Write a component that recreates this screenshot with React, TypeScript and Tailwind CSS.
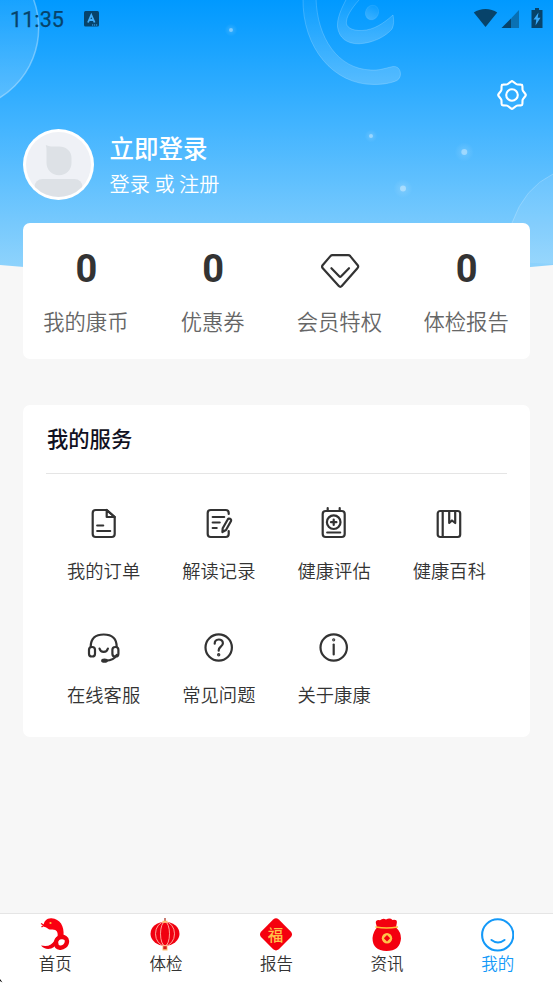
import type { ReactNode } from "react";

const stroke = {
  fill: "none",
  stroke: "currentColor",
  strokeLinecap: "round",
  strokeLinejoin: "round",
} as const;

function HeaderBackground() {
  return (
    <svg className="absolute left-0 top-0" width="553" height="280" viewBox="0 0 553 280">
      <defs>
        <linearGradient id="sky" x1="0" y1="0" x2="0" y2="1">
          <stop offset="0" stopColor="#0099ff" />
          <stop offset="0.45" stopColor="#42b4ff" />
          <stop offset="1" stopColor="#94d5fc" />
        </linearGradient>
        <linearGradient id="shade" x1="0" y1="0" x2="0" y2="1">
          <stop offset="0" stopColor="#fff" stopOpacity="0.04" />
          <stop offset="1" stopColor="#fff" stopOpacity="0.2" />
        </linearGradient>
        <radialGradient id="glow">
          <stop offset="0" stopColor="#fff" stopOpacity="0.16" />
          <stop offset="1" stopColor="#fff" stopOpacity="0" />
        </radialGradient>
      </defs>
      <path d="M0 0H553V265Q276 291 0 265Z" fill="url(#sky)" />
      <circle cx="-43.3" cy="28" r="82" fill="url(#shade)" stroke="#fff" strokeOpacity="0.33" strokeWidth="1.5" />
      <path
        d="M553 174Q524 188 512 223V262L553 264Z"
        fill="#fff"
        fillOpacity="0.09"
      />
      <path d="M553 174Q524 188 512 223" fill="none" stroke="#fff" strokeOpacity="0.2" />
      <g fill="url(#shade)" stroke="#fff" strokeOpacity="0.18">
        <path d="M303-2C302 48 334 85 374 84.500C384 84.500 391 83 397 80.500C403 77 401 65.500 393 66.500C382 69 379 70.500 371 70C338 69 317 38 316-2" />
        <path d="M347-2C341 9 337 18 337.500 27C339 38 347 44 359 43.800C374 43 386 36 392 29C394 25 394 20 393 15C384 23 374 30 362 30.500C352 31 345 27 346.500 21C347 15 354 5 361-2" />
        <ellipse cx="372" cy="12.500" rx="6.500" ry="7.500" transform="rotate(25 372 12.500)" strokeOpacity="0.08" />
      </g>
      {[
        [231, 30, 2],
        [371, 136, 2],
        [464.300, 152, 3],
        [403, 188.500, 3],
      ].map(([x, y, r]) => (
        <g key={x}>
          <circle cx={x} cy={y} r={r * 3.2} fill="url(#glow)" />
          <circle cx={x} cy={y} r={r} fill="#fff" fillOpacity="0.36" />
        </g>
      ))}
    </svg>
  );
}

function StatusBar() {
  return (
    <div className="flex h-[38px] items-center pl-[10px] pr-[10px] text-[#07436a]">
      <span className="w-[74px] pt-px font-[Roboto,sans-serif] text-[21.5px] leading-[38px] tracking-[0.1px] [-webkit-text-stroke:0.25px_currentColor]">
        11:35
      </span>
      <svg width="15" height="16" viewBox="0 0 15 16" className="-mt-px">
        <rect width="15" height="15.500" rx="1.500" fill="currentColor" />
        <path d="M4 11.500L7.300 4L10.600 11.500M5.200 9H9.400" fill="none" stroke="#40aefb" strokeWidth="1.800" />
        <path d="M8 14H14" stroke="#40aefb" strokeDasharray="1.200 0.800" />
      </svg>
      <svg width="70" height="20" viewBox="0 0 70 20" className="ml-auto -mt-0.5">
        <path d="M0.800 4.500C7-0.200 18-0.200 24.200 4.500L12.500 19Z" fill="currentColor" />
        <path d="M38 10.500L46 2V20H38Z" fill="currentColor" fillOpacity="0.5" />
        <path d="M28.500 20L38 10.500V20Z" fill="currentColor" />
        <path d="M58.500 2H62V0H66V2H69.500V20H58.500Z" fill="currentColor" />
        <path d="M65.500 4.500L60.500 11.500H63.300L62.500 17.500L67.500 9.800H64.700Z" fill="#36a9fb" />
      </svg>
    </div>
  );
}

function GearIcon() {
  return (
    <svg width="32" height="32" viewBox="-16 -16 32 32" className="text-white" {...stroke} strokeWidth="2.1">
      <path d="M-1-13.400Q0-14.200 1-13.400L4.200-11Q5-10.400 6-10.500L9-10.400Q10.400-10.400 10.400-9L10.500-6Q10.400-5 11-4.200L13.400-1Q14.200 0 13.400 1L11 4.200Q10.400 5 10.500 6L10.400 9Q10.400 10.400 9 10.400L6 10.500Q5 10.400 4.200 11L1 13.400Q0 14.200-1 13.400L-4.200 11Q-5 10.400-6 10.500L-9 10.400Q-10.400 10.400-10.400 9L-10.500 6Q-10.400 5-11 4.200L-13.400 1Q-14.200 0-13.400-1L-11-4.200Q-10.400-5-10.500-6L-10.400-9Q-10.400-10.400-9-10.400L-6-10.500Q-5-10.400-4.200-11Z" />
      <circle r="5.800" />
    </svg>
  );
}

function Avatar() {
  return (
    <svg width="71" height="71" viewBox="0 0 71 71" className="shrink-0">
      <defs>
        <clipPath id="face">
          <circle cx="35.500" cy="35.500" r="32.500" />
        </clipPath>
      </defs>
      <circle cx="35.500" cy="35.500" r="35.500" fill="#fff" />
      <circle cx="35.500" cy="35.500" r="32.500" fill="#eff1f6" />
      <g fill="#dde1e6" clipPath="url(#face)">
        <path d="M22.800 16Q25.500 17.400 28 17.400H36C43 17.400 48.500 22 48.500 29V34C48.500 41 43 46.200 36 46.200S23.500 41 23.500 34V22Q23.500 18 22.800 16Z" />
        <rect x="11.500" y="50" width="48" height="24" rx="8" />
      </g>
    </svg>
  );
}

function DiamondIcon() {
  return (
    <svg width="40" height="36" viewBox="0 0 40 36" className="mt-[3px]" {...stroke} strokeWidth="2.2">
      <path d="M12.500 2.200H28.200Q29.400 2.200 30.200 3.100L37.700 12.200Q38.800 13.800 37.400 15.200L21.800 33Q20.300 34.600 18.800 33L2.800 15.200Q1.500 13.800 2.600 12.200L10.400 3.100Q11.200 2.200 12.500 2.200Z" />
      <path d="M11.400 15.200L19.200 23.300Q20.200 24.300 21.200 23.300L29 15.200" />
    </svg>
  );
}

function ServiceIcon({ children }: { children: ReactNode }) {
  return (
    <svg width="36" height="36" viewBox="0.3 0 36 36" {...stroke} strokeWidth="2.200">
      {children}
    </svg>
  );
}

const stats: { label: string; value: ReactNode }[] = [
  { label: "我的康币", value: "0" },
  { label: "优惠券", value: "0" },
  { label: "会员特权", value: <DiamondIcon /> },
  { label: "体检报告", value: "0" },
];

const services = [
  {
    label: "我的订单",
    icon: (
      <>
        <path d="M21 5H10Q7 5 7 8V29Q7 32 10 32H26Q29 32 29 29V12Z" />
        <path d="M21 5V12H29Z" />
        <path d="M11.500 20.500H17.500M11.500 26H24.500" />
      </>
    ),
  },
  {
    label: "解读记录",
    icon: (
      <>
        <path d="M28 9V8Q28 5 25 5H10Q7 5 7 8V29Q7 32 10 32H25Q28 32 28 29V26" />
        <path d="M12 12H23.500M12 17.500H19M12 23H16" />
        <path d="M27 14.500Q27.800 13 29.300 13.800Q30.900 14.700 30.200 16.200L25.300 25L21.700 27L22 23.300Z" />
      </>
    ),
  },
  {
    label: "健康评估",
    icon: (
      <>
        <rect x="7" y="6" width="22" height="26" rx="3" />
        <path d="M12 3V6M24 3V6M11.500 27.500H24.500" />
        <circle cx="18" cy="17.200" r="6.800" />
        <path d="M18 14.500V20M15.300 17.200H20.700" />
      </>
    ),
  },
  {
    label: "健康百科",
    icon: (
      <>
        <rect x="7" y="6" width="22.500" height="26" rx="2.500" />
        <path d="M12 6V32M18.500 6V18L21.300 15.500L24.500 18V6" />
      </>
    ),
  },
  {
    label: "在线客服",
    icon: (
      <>
        <path d="M5 18C5 9 10 5.500 18 5.500S31 9 31 18M31 26C29 30 25 31.500 20 31.700" />
        <rect x="3.300" y="18" width="6" height="9.500" rx="2.800" />
        <rect x="26.700" y="18" width="6" height="9.500" rx="2.800" />
        <path d="M13.800 19.500C15 24 21 24 22.200 19.500" />
        <ellipse cx="18.800" cy="31.700" rx="2.300" ry="1" fill="currentColor" />
      </>
    ),
  },
  {
    label: "常见问题",
    icon: (
      <>
        <circle cx="18" cy="18.500" r="13.200" />
        <path d="M14 14.700C14 9.200 22.200 9.200 22.200 14.200C22.200 17.700 18 17.700 18 21.200V21.700" />
        <circle cx="18" cy="25.700" r="0.600" fill="currentColor" />
      </>
    ),
  },
  {
    label: "关于康康",
    icon: (
      <>
        <circle cx="18" cy="18.500" r="13.200" />
        <path d="M18 15.500V25.500" strokeWidth="2.200" />
        <circle cx="18" cy="10.800" r="0.500" fill="currentColor" />
      </>
    ),
  },
];

const tabs = [
  {
    label: "首页",
    icon: (
      <>
        <path d="M4.500 8.500C4.500 3 8 0 12.500 0.300C21 1 25.500 8 24.500 18L18.500 19C19.500 14 17.500 11 12.500 11.500C9 12 8.500 9.500 4.500 8.500Z" fill="#fb0010" />
        <path d="M25 17C21 16 17.500 19 15.500 22.500C13 27 9 29 2 27.500C5 31.500 11 32 15 29L20 21.500Z" fill="#ee0012" />
        <path d="M17 24.500C17 18 27.800 17 28 23C28 27.500 24 30 21 29.700C18 29.500 17 27.500 17 24.500Z" fill="none" stroke="#f0000f" strokeWidth="4.400" />
        <path d="M2 5.500L5 7.200L2.500 9" fill="none" stroke="#f8000f" strokeWidth="1.300" />
        <circle cx="11.500" cy="5" r="1.100" fill="#ffc13f" />
      </>
    ),
  },
  {
    label: "体检",
    icon: (
      <>
        <path d="M16 0V4" stroke="#a52617" strokeWidth="1.200" />
        <ellipse cx="16" cy="15.800" rx="14.500" ry="12" fill="#f00010" />
        <g fill="none" stroke="#ffb8a8" strokeWidth="0.900">
          <ellipse cx="16" cy="15.800" rx="9.500" ry="12" />
          <ellipse cx="16" cy="15.800" rx="4.500" ry="12" />
        </g>
        <path d="M13.500 2.800H18.500V4.800H13.500ZM13.500 27.500H18.500V32.500H13.500Z" fill="#ffbf70" />
        <path d="M14.300 28.200H17.700V31.200H14.300Z" fill="#d62021" />
      </>
    ),
  },
  {
    label: "报告",
    icon: (
      <>
        <path d="M13.200 1.500Q16-0.800 18.800 1.500L31 13.700Q33 16.400 31 19.100L18.800 31.300Q16 33.500 13.200 31.300L1 19.100Q-1 16.400 1 13.700Z" fill="#f5000e" />
        <text x="15.500" y="22.500" textAnchor="middle" fontSize="15.500" fontWeight="500" fill="#ffc34b">福</text>
      </>
    ),
  },
  {
    label: "资讯",
    icon: (
      <>
        <path d="M6 9.500L4.800 5Q4.500 1.300 9 2.200Q12-0.500 15 1.500Q19-0.700 21.500 2Q26.500 1 25.800 5L25 9.500Q30 14 30 20.500Q29 33 15.500 33Q1.500 32.500 1.500 20Q2 14 6 9.500Z" fill="#f3000f" />
        <path d="M5 9Q15.500 11 26.500 9" fill="none" stroke="#ffbd38" strokeWidth="1.300" strokeLinecap="round" />
        <circle cx="16" cy="20.200" r="5.200" fill="#ffc44a" />
        <path d="M16 17L19.200 20.200L16 23.400L12.800 20.200Z" fill="#f3000f" />
      </>
    ),
  },
  {
    label: "我的",
    active: true,
    icon: (
      <g fill="none" stroke="#1499f8" strokeWidth="2.100" strokeLinecap="round">
        <circle cx="16.700" cy="16.900" r="15.600" />
        <path d="M10.500 22Q17 27 23.500 22" />
      </g>
    ),
  },
];

export default function App() {
  return (
    <div className="relative flex h-[983px] w-[553px] flex-col overflow-hidden bg-[#f7f7f7] font-['Noto_Sans_CJK_SC',sans-serif] text-[#333]">
      <HeaderBackground />
      <div className="relative flex flex-1 flex-col">
        <StatusBar />
        <div className="mt-[41px] flex justify-end pr-[25.5px]">
          <GearIcon />
        </div>
        <div className="mt-[18px] flex pl-[23px]">
          <Avatar />
          <div className="ml-[15.5px] text-white">
            <h1 className="mt-px text-[24.5px] font-medium leading-9">立即登录</h1>
            <p className="mt-[3px] text-[20.2px] font-[350] leading-[30px]">登录 或 注册</p>
          </div>
        </div>

        <section className="mx-[23px] mt-[23px] grid h-[136px] grid-cols-4 rounded-[7px] bg-white">
          {stats.map((s) => (
            <div key={s.label} className="flex flex-col items-center">
              <div className="mt-6 flex h-[44px] items-center font-[Roboto,sans-serif] text-[38px] font-bold leading-[44px]">
                {s.value}
              </div>
              <div className="mr-px mt-[14px] text-[21.3px] font-[350] leading-8 text-[#666]">{s.label}</div>
            </div>
          ))}
        </section>

        <section className="mx-[23px] mt-[46px] h-[332px] rounded-[7px] bg-white px-[23px]">
          <h2 className="h-[69px] border-b border-[#e5e5e5] pl-px pt-[17px] text-[21.3px] font-medium leading-8 text-[#111122]">
            我的服务
          </h2>
          <div className="grid grid-cols-4 pt-[31px]">
            {services.map((s) => (
              <div key={s.label} className="flex h-[124px] flex-col items-center">
                <ServiceIcon>{s.icon}</ServiceIcon>
                <span className="mt-[15px] text-[18.3px] font-[350] leading-7">{s.label}</span>
              </div>
            ))}
          </div>
        </section>

        <nav className="mt-auto grid h-[70px] grid-cols-5 border-t border-[#e5e5e5] bg-white">
          {tabs.map((t) => (
            <div key={t.label} className={t.active ? "flex flex-col items-center text-[#1499f8]" : "flex flex-col items-center"}>
              <svg width="33" height="34" viewBox="0 0 33 34" className="mt-1">
                {t.icon}
              </svg>
              <span className="-mt-px text-[16.5px] font-[350] leading-6">{t.label}</span>
            </div>
          ))}
        </nav>
      </div>
      <svg className="absolute bottom-0 left-0" width="3" height="4" viewBox="0 0 3 4">
        <path d="M0 0L2.500 3.500L0 2Z" fill="#000" />
      </svg>
    </div>
  );
}
